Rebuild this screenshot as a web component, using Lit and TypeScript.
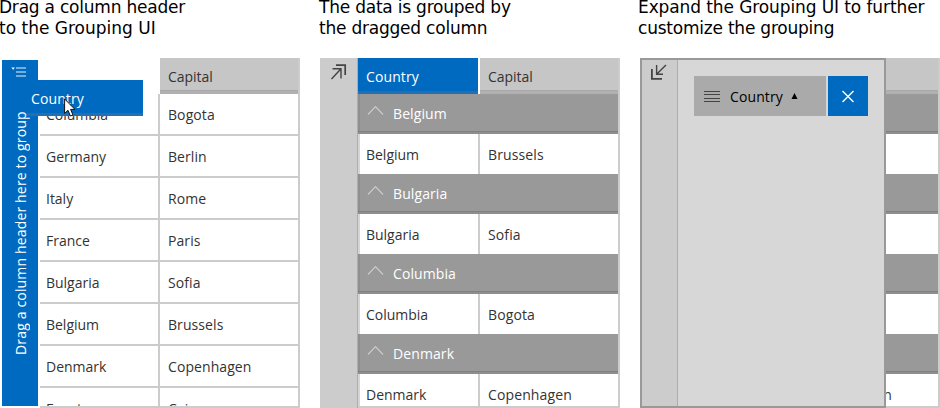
import { LitElement, html, css } from "lit";
import { customElement, property } from "lit/decorators.js";

const plainRows: [string, string][] = [
  ["Columbia", "Bogota"],
  ["Germany", "Berlin"],
  ["Italy", "Rome"],
  ["France", "Paris"],
  ["Bulgaria", "Sofia"],
  ["Belgium", "Brussels"],
  ["Denmark", "Copenhagen"],
  ["Egypt", "Cairo"],
];

const groupedRows: [string, string][] = [
  ["Belgium", "Brussels"],
  ["Bulgaria", "Sofia"],
  ["Columbia", "Bogota"],
  ["Denmark", "Copenhagen"],
];

@customElement("plain-grid")
class PlainGrid extends LitElement {
  static styles = css`
    :host { display: flex; position: relative; box-sizing: border-box; width: 298px; height: 350px; }
    .bar { width: 36px; height: 346px; margin: 2px 2px 0 0; background: #006ac1; color: #fff; display: flex; flex-direction: column; align-items: center; box-sizing: border-box; padding-top: 7px; }
    .bar svg { display: block; flex: none; }
    .hint { position: relative; z-index: 2; writing-mode: vertical-rl; transform: rotate(180deg); white-space: nowrap; line-height: 20px; height: 250px; margin: 27px 0 0 2px; font-size: 14px; letter-spacing: 0.16px; }
    .grid { width: 260px; height: 350px; box-sizing: border-box; border-bottom: 2px solid #ccc; overflow: hidden; }
    .head { display: flex; height: 36px; justify-content: flex-end; }
    .cap { width: 140px; height: 36px; box-sizing: border-box; background: linear-gradient(#c6c6c6 32px, #a9a9a9 32px 33px, #b1b1b1 33px); border-right: 2px solid #ccc; padding-left: 8px; line-height: 37px; color: #333; }
    .row { display: grid; grid-template: 42px / 120px 140px; height: 42px; line-height: 42px; color: #333; }
    .cell { box-sizing: border-box; height: 42px; border-right: 2px solid #ccc; border-bottom: 2px solid #ccc; padding-left: 6px; }
    .cell + .cell { padding-left: 8px; letter-spacing: 0.08px; }
    .drag { position: absolute; left: 20px; top: 22px; width: 121px; height: 36px; box-sizing: border-box; padding-left: 9px; line-height: 38px; background: linear-gradient(#256fae, #256fae) right bottom / 120px 3px no-repeat #006ac1; color: #fff; letter-spacing: 0.1px; }
    .cursor { position: absolute; z-index: 3; left: 62px; top: 40px; }
  `;
  render() {
    return html`
      <div class="bar">
        <svg width="18" height="11" viewBox="0 0 18 11"><path d="M.3 .5h3.6L2.2 2.8z" fill="#fff"/><path d="M5 1h10M5 5h10M5 9h10" stroke="#fff" stroke-width="1.2" opacity=".9"/></svg>
        <div class="hint">Drag a column header here to group</div>
      </div>
      <div class="grid">
        <div class="head"><div class="cap">Capital</div></div>
        ${plainRows.map(([a, b]) => html`<div class="row"><div class="cell">${a}</div><div class="cell">${b}</div></div>`)}
      </div>
      <div class="drag">Country</div>
      <svg class="cursor" width="14" height="20" viewBox="0 0 14 20"><path d="M.6 1V15.4L4 12.3 6.4 18 9 17 6.6 11.4H11Z" fill="#fff" stroke="#111" stroke-width="1"/></svg>
    `;
  }
}

@customElement("grouped-grid")
class GroupedGrid extends LitElement {
  @property({ type: Boolean }) expanded = false;
  static styles = css`
    :host { display: flex; position: relative; width: 300px; height: 350px; overflow: hidden; }
    .rail { width: 38px; box-sizing: border-box; background: #ccc; border-right: 1px solid #adadad; padding: 5px 0 0 10px; flex: none; }
    .rail svg { display: block; }
    .grid { width: 262px; height: 350px; box-sizing: border-box; border-right: 2px solid #ccc; border-bottom: 2px solid #ccc; overflow: hidden; }
    .head { display: flex; gap: 2px; height: 36px; line-height: 37px; }
    .key { width: 120px; box-sizing: border-box; background: #006ac1; color: #fff; border-bottom: 3px solid #256fae; padding-left: 8px; letter-spacing: 0.1px; }
    .cap { flex: 1; box-sizing: border-box; background: linear-gradient(#c6c6c6 32px, #a9a9a9 32px 33px, #b1b1b1 33px); padding-left: 8px; color: #333; }
    .group { height: 40px; box-sizing: border-box; background: #999; color: #fff; display: flex; align-items: center; gap: 9px; padding: 0 0 0 9px; border-bottom: 2px solid #8e8e8e; box-shadow: inset 0 -1px #808080, inset 2px 0 #8f8f8f; letter-spacing: 0.1px; }
    .group span { line-height: 38px; padding-top: 2px; }
    .group svg { margin-top: -5px; }
    .row { display: grid; grid-template: 40px / 122px 1fr; height: 40px; line-height: 42px; color: #333; }
    .cell { box-sizing: border-box; height: 40px; border-left: 2px solid #d5d5d5; border-right: 2px solid #ccc; padding-left: 6px; }
    .cell + .cell { border: 0; padding-left: 8px; letter-spacing: 0.12px; }
    .panel { position: absolute; left: 0; top: 0; width: 246px; height: 350px; box-sizing: border-box; border: 2px solid #999; background: #d7d7d7; display: flex; }
    .panel .rail { width: 36px; padding: 4px 0 0 8px; }
    .chips { display: flex; gap: 2px; padding: 16px 0 0 16px; height: 40px; }
    .chip { width: 132px; background: #aaa; color: #000; display: flex; align-items: center; box-sizing: border-box; padding-left: 10px; letter-spacing: 0.1px; }
    .chip span { margin: 1px 8px 0 10px; line-height: 40px; }
    .close { width: 40px; background: #006ac1; display: flex; align-items: center; justify-content: center; }
  `;
  private panel() {
    return html`
      <div class="panel">
        <div class="rail"><svg width="18" height="18" viewBox="0 0 18 18" fill="none" stroke="#444"><path d="M1.9 5v9.9H12" stroke-width="1.8"/><path d="M6.6 1v9.3H13M6.6 10.3L16 1" stroke-width="1.4"/></svg></div>
        <div class="chips">
          <div class="chip">
            <svg width="16" height="11" viewBox="0 0 16 11"><path d="M0 .5h16M0 3.5h16M0 7.5h16M0 10.5h16" stroke="#444"/></svg>
            <span>Country</span>
            <svg width="7" height="7" viewBox="0 0 7 7"><path d="M3.5 0L6.5 6H.5z" fill="#000"/></svg>
          </div>
          <div class="close"><svg width="14" height="14" viewBox="0 0 14 14"><path d="M1.5 2l11 11M12.5 2l-11 11" stroke="#fff" stroke-width="1.4"/></svg></div>
        </div>
      </div>
    `;
  }
  render() {
    return html`
      <div class="rail"><svg width="18" height="18" viewBox="0 0 18 18" fill="none" stroke="#444"><path d="M6 2.1h9.2V12" stroke-width="1.7"/><path d="M2.5 5.8H11V15.4M11 5.8L1.5 16" stroke-width="1.4"/></svg></div>
      <div class="grid">
        <div class="head"><div class="key">Country</div><div class="cap">Capital</div></div>
        ${groupedRows.map(([a, b]) => html`
          <div class="group"><svg width="17" height="11" viewBox="0 0 17 11" fill="none"><path d="M1 9.5L8.5 1.5 16 9.5" stroke="#ccc" stroke-width="1.1"/></svg><span>${a}</span></div>
          <div class="row"><div class="cell">${a}</div><div class="cell">${b}</div></div>
        `)}
      </div>
      ${this.expanded ? this.panel() : ""}
    `;
  }
}

@customElement("app-root")
class AppRoot extends LitElement {
  static styles = css`
    :host { display: block; width: 940px; height: 408px; overflow: hidden; background: #fff; font: 14px "Open Sans", "Noto Sans", sans-serif; letter-spacing: -0.02px; }
    .page { display: grid; grid-template-columns: 320px 320px 300px; }
    .step { display: flex; flex-direction: column; }
    .title { height: 58px; box-sizing: border-box; font-family: "DejaVu Sans", sans-serif; font-size: 17px; letter-spacing: -0.22px; white-space: pre; color: #000; }
    .title div { margin-left: -1px; height: 21px; line-height: 15px; }
    .title .loose { letter-spacing: 0; }
    .title .wide { letter-spacing: -0.1px; }
    .third .title div { margin-left: -2px; }
    .first { margin-left: 2px; }
  `;
  render() {
    return html`
      <div class="page">
        <div class="step"><div class="title"><div>Drag a column header</div><div class="loose">to the Grouping UI</div></div><plain-grid class="first"></plain-grid></div>
        <div class="step"><div class="title"><div>The data is grouped by</div><div>the dragged column</div></div><grouped-grid></grouped-grid></div>
        <div class="step third"><div class="title"><div class="wide">Expand the Grouping UI to further</div><div>customize the grouping</div></div><grouped-grid expanded></grouped-grid></div>
      </div>
    `;
  }
}
